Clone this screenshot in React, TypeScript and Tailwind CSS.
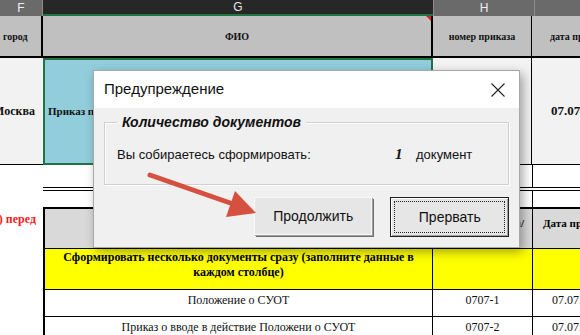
import React from "react";

const serif = "font-['Liberation_Serif','Times_New_Roman',serif]";
const sans = "font-['Liberation_Sans','Noto_Sans',sans-serif]";

const ColumnHeaders = () => (
  <div className={`flex h-[16px] text-[12px] leading-[16px] ${sans}`}>
    <div className="w-[43px] shrink-0 bg-[#6a6a6a] text-center text-[#f0f0f0] border-r border-[#8c8c8c]">F</div>
    <div className="w-[390px] shrink-0 bg-[#272727] text-center text-[#e6e6e6] border-b-2 border-[#217346] leading-[14px]">G</div>
    <div className="w-[101px] shrink-0 bg-[#6a6a6a] text-center text-[#f0f0f0] border-l border-[#8c8c8c]">H</div>
    <div className="flex-1 bg-[#6a6a6a] border-l border-[#8c8c8c]" />
  </div>
);

export default function App() {
  return (
    <div className={`relative w-[580px] h-[335px] overflow-hidden bg-white ${serif}`}>
      <ColumnHeaders />

      {/* header row */}
      <div className="flex h-[42px] bg-[#c0c0c0] border-b-2 border-black text-[10px] font-bold text-[#111]">
        <div className="w-[43px] shrink-0 border-r-2 border-black flex items-center pl-[3px]">город</div>
        <div className="relative w-[390px] shrink-0 border-r-2 border-black flex items-center justify-center">
          ФИО
          <div className="absolute right-0 top-0 w-0 h-0 border-l-[5px] border-l-transparent border-t-[5px] border-t-[#e02020]" />
        </div>
        <div className="w-[99px] shrink-0 border-r border-black flex items-center justify-center">номер приказа</div>
        <div className="flex-1 flex items-center pl-[18px] whitespace-nowrap overflow-hidden">дата приказа</div>
      </div>

      {/* selected data row */}
      <div className="flex h-[107px] font-bold text-[#111]">
        <div className="w-[43px] shrink-0 bg-[#f2f2f2] border-b border-black flex items-center justify-end pr-[8px] text-[12px] whitespace-nowrap overflow-hidden">Москва</div>
        <div className="w-[390px] shrink-0 bg-[#92cddc] border-2 border-[#217346] flex items-center pl-[3px] text-[11px] whitespace-nowrap overflow-hidden">
          Приказ по организации
        </div>
        <div className="w-[99px] shrink-0 bg-[#f2f2f2] border-r border-b border-black" />
        <div className="flex-1 bg-[#f2f2f2] border-b border-black flex items-center pl-[19px] text-[13px] whitespace-nowrap overflow-hidden">07.07.2023</div>
      </div>

      {/* blank row */}
      <div className="flex h-[22px]">
        <div className="w-[43px] shrink-0" />
        <div className="w-[490px] shrink-0 border-r border-black" />
        <div className="flex-1" />
      </div>

      {/* double border */}
      <div className="flex h-[4px]">
        <div className="w-[43px] shrink-0" />
        <div className="flex-1 border-y border-black" />
      </div>

      <div className="flex h-[16px]">
        <div className="w-[43px] shrink-0" />
        <div className="w-[490px] shrink-0 border-r border-black" />
        <div className="flex-1" />
      </div>

      {/* table header */}
      <div className="flex h-[41px] font-bold">
        <div className="w-[43px] shrink-0 flex justify-end pr-[7px] pt-[3px] text-[12px] text-[#ff1a1a] whitespace-nowrap overflow-hidden">(СУОТ) перед</div>
        <div className="w-[390px] shrink-0 bg-[#d9d9d9] border-t-2 border-l-2 border-r border-black" />
        <div className="w-[100px] shrink-0 bg-[#d9d9d9] border-t-2 border-r border-black flex justify-end pt-[6px] pr-[8px] text-[11px]">№ п/</div>
        <div className="flex-1 bg-[#d9d9d9] border-t-2 border-black pl-[10px] pt-[6px] text-[11px] whitespace-nowrap overflow-hidden">Дата приказа</div>
      </div>

      {/* yellow row */}
      <div className="flex h-[42px] text-[12px] font-bold leading-[15px]">
        <div className="w-[43px] shrink-0" />
        <div className="w-[390px] shrink-0 bg-[#ffff00] border-y border-l-2 border-r border-black px-[8px] pt-[1px] text-center">
          Сформировать несколько документы сразу (заполните данные в каждом столбце)
        </div>
        <div className="w-[100px] shrink-0 bg-[#ffff00] border-y border-r border-black" />
        <div className="flex-1 bg-[#ffff00] border-y border-black" />
      </div>

      {/* data rows */}
      {[
        ["Положение о СУОТ", "0707-1"],
        ["Приказ о вводе в действие Положени о СУОТ", "0707-2"],
      ].map(([name, num]) => (
        <div key={num} className="flex h-[27px] text-[12px] leading-[14px] text-[#111]">
          <div className="w-[43px] shrink-0" />
          <div className="w-[390px] shrink-0 border-b border-l-2 border-r border-black text-center pt-[3px] whitespace-nowrap">{name}</div>
          <div className="w-[100px] shrink-0 border-b border-r border-black text-center pt-[3px]">{num}</div>
          <div className="flex-1 border-b border-black pl-[19px] pt-[3px] whitespace-nowrap overflow-hidden">07.07.2023</div>
        </div>
      ))}

      {/* dialog */}
      <div className={`absolute left-[93px] top-[70px] w-[427px] h-[178px] flex flex-col bg-[#f0f0f0] border border-[#a8a8a8] shadow-[3px_4px_10px_rgba(0,0,0,0.35)] ${sans}`}>
        <div className="h-[37px] shrink-0 bg-white flex items-center justify-between pl-[10px] pr-[12px]">
          <span className="text-[15px] text-[#111]">Предупреждение</span>
          <svg width="16" height="16" viewBox="0 0 16 16" className="mr-[1px]">
            <path d="M1.5 1.5 L14.5 14.5 M14.5 1.5 L1.5 14.5" stroke="#222" strokeWidth="1.1" fill="none" />
          </svg>
        </div>
        <div className="flex-1 flex flex-col px-[10px] pt-[14px]">
          <div className="relative h-[63px] border border-[#d0d0d0] shadow-[inset_1px_1px_0_#fff,1px_1px_0_#fff]">
            <span className="absolute left-[12px] top-[-11px] bg-[#f0f0f0] px-[5px] text-[14px] font-bold italic text-[#111]">Количество документов</span>
            <div className="flex items-center h-full pt-[2px] pl-[12px] text-[13px] text-[#111]">
              <span className="w-[278px]">Вы собираетесь сформировать:</span>
              <span className={`w-[21px] text-[15px] font-bold italic ${serif}`}>1</span>
              <span>документ</span>
            </div>
          </div>
          <div className="flex gap-[18px] pl-[150px] pt-[12px] text-[14px] text-[#111]">
            <button className="w-[119px] h-[38px] bg-[#e6e6e6] border border-[#f8f8f8] shadow-[1px_1px_0_#a0a0a0,2px_2px_0_#707070]">
              Продолжить
            </button>
            <button className="w-[119px] h-[40px] bg-[#e6e6e6] border border-[#202020] shadow-[inset_1px_1px_0_#fff,inset_-1px_-1px_0_#a0a0a0] p-[3px]">
              <div className="w-full h-full border border-dotted border-[#222] flex items-center justify-center">Прервать</div>
            </button>
          </div>
        </div>
      </div>

      {/* arrow */}
      <svg className="absolute left-0 top-0 pointer-events-none" width="580" height="335">
        <line x1="150" y1="175" x2="236" y2="205" stroke="#d6503f" strokeWidth="5" strokeLinecap="round" />
        <polygon points="235,191 256,213 226,217" fill="#d6503f" />
      </svg>
    </div>
  );
}
